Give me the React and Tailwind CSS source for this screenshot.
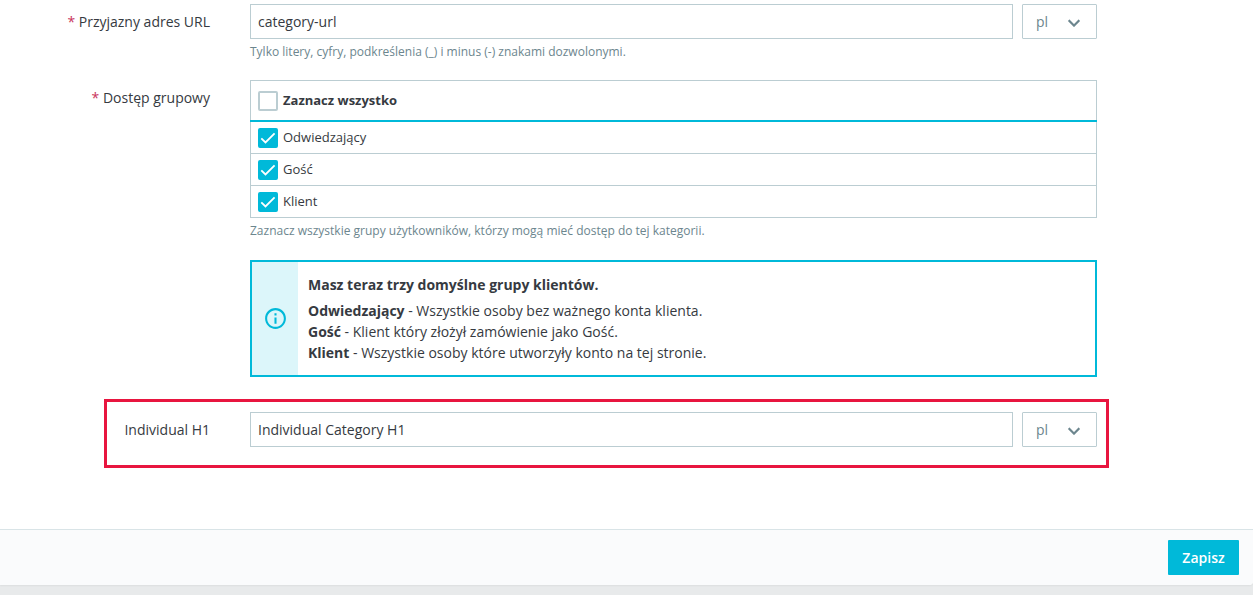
import { useState } from "react";

const groups = ["Odwiedzający", "Gość", "Klient"];

function Checkbox({ id, checked, onChange }) {
  return (
    <span className="relative block size-5 shrink-0">
      <input
        id={id}
        type="checkbox"
        checked={checked}
        onChange={onChange}
        className="peer block size-5 appearance-none rounded-xs border-2 border-[#bbcdd2] bg-white checked:border-[#00b9d9] checked:bg-[#00b9d9]"
      />
      <svg
        viewBox="0 0 20 20"
        className="pointer-events-none absolute inset-0 hidden size-5 peer-checked:block"
        fill="none"
        stroke="#fff"
        strokeWidth="1.8"
        aria-hidden="true"
      >
        <path d="M3.3 10.3 7.5 14.5 16.6 5.4" />
      </svg>
    </span>
  );
}

function LangSelect({ label }) {
  return (
    <span className="relative block w-[75px] shrink-0">
      <select
        aria-label={label}
        defaultValue="pl"
        className="block h-[35px] w-full appearance-none rounded-[1px] border border-[#bbcdd2] bg-white pl-[13px] text-sm font-medium text-[#6c868e]"
      >
        <option value="pl">pl</option>
        <option value="en">en</option>
      </select>
      <svg
        viewBox="0 0 24 24"
        className="pointer-events-none absolute top-[7px] right-[11px] size-6"
        fill="#6c868e"
        stroke="#6c868e"
        strokeWidth="0.2"
        aria-hidden="true"
      >
        <path d="M7.41 8.59 12 13.17l4.59-4.58L18 10l-6 6-6-6z" />
      </svg>
    </span>
  );
}

function TextField({ id, initial, langLabel }) {
  return (
    <div className="flex gap-[9px]">
      <input
        id={id}
        type="text"
        defaultValue={initial}
        className="h-[35px] min-w-0 flex-1 border border-[#bbcdd2] bg-white px-[7px] text-sm text-[#363a41]"
      />
      <LangSelect label={langLabel} />
    </div>
  );
}

function Required() {
  return <span className="text-[#c9355c]">* </span>;
}

export default function App() {
  const [selected, setSelected] = useState(groups);
  const [all, setAll] = useState(false);

  const toggleAll = () => {
    setSelected(all ? [] : groups);
    setAll(!all);
  };
  const toggle = (name) =>
    setSelected((list) =>
      list.includes(name) ? list.filter((item) => item !== name) : [...list, name]
    );

  return (
    <div className="min-h-screen bg-[#e8eaeb] font-['Open_Sans',sans-serif] text-sm text-[#363a41]">
      <form
        className="rounded-br-sm bg-white shadow-xs"
        onSubmit={(event) => event.preventDefault()}
      >
        <div className="pt-1 pb-[61px]">
          <div className="flex gap-10 pr-[156px]">
            <label htmlFor="url" className="w-[210px] shrink-0 pt-2 text-right">
              <Required />
              Przyjazny adres URL
            </label>
            <div className="min-w-0 flex-1">
              <TextField id="url" initial="category-url" langLabel="Język adresu URL" />
              <p className="pt-[5px] text-xs text-[#6c868e]">
                Tylko litery, cyfry, podkreślenia (_) i minus (-) znakami dozwolonymi.
              </p>
            </div>
          </div>

          <div className="flex gap-10 pt-5 pr-[156px]">
            <div id="groups-label" className="w-[210px] shrink-0 pt-2 text-right">
              <Required />
              Dostęp grupowy
            </div>
            <div className="min-w-0 flex-1">
              <table
                aria-labelledby="groups-label"
                className="w-full border-collapse border border-[#bbcdd2] text-[13px]"
              >
                <thead>
                  <tr className="border-b-2 border-[#00b9d9]">
                    <th className="h-10 px-[7px] pt-px pb-0 text-left font-bold">
                      <div className="flex items-center gap-[5px]">
                        <Checkbox id="all" checked={all} onChange={toggleAll} />
                        <label htmlFor="all">Zaznacz wszystko</label>
                      </div>
                    </th>
                  </tr>
                </thead>
                <tbody>
                  {groups.map((name) => (
                    <tr key={name} className="group border-b border-[#bbcdd2]">
                      <td className="h-8 px-[7px] py-0 group-first:h-[33px] group-first:pt-px">
                        <div className="flex items-center gap-[5px]">
                          <Checkbox
                            id={name}
                            checked={selected.includes(name)}
                            onChange={() => toggle(name)}
                          />
                          <label htmlFor={name}>{name}</label>
                        </div>
                      </td>
                    </tr>
                  ))}
                </tbody>
              </table>
              <p className="pt-[5px] text-xs text-[#6c868e]">
                Zaznacz wszystkie grupy użytkowników, którzy mogą mieć dostęp do tej kategorii.
              </p>

              <div className="mt-[21px] flex border-2 border-[#00b9d9] bg-white">
                <div className="flex w-[46px] shrink-0 items-center justify-center bg-[#dcf6fa]">
                  <svg viewBox="0 0 24 24" className="size-[25px]" fill="#00b9d9" aria-hidden="true">
                    <path d="M11 7h2v2h-2zm0 4h2v6h-2zm1-9C6.48 2 2 6.48 2 12s4.48 10 10 10 10-4.48 10-10S17.52 2 12 2zm0 18c-4.41 0-8-3.59-8-8s3.59-8 8-8 8 3.59 8 8-3.59 8-8 8z" />
                  </svg>
                </div>
                <div className="px-[10px] pt-3 pb-3 leading-[21px]">
                  <p className="pb-[5px] font-bold">Masz teraz trzy domyślne grupy klientów.</p>
                  <p>
                    <b>Odwiedzający</b> - Wszystkie osoby bez ważnego konta klienta.
                  </p>
                  <p>
                    <b>Gość</b> - Klient który złożył zamówienie jako Gość.
                  </p>
                  <p>
                    <b>Klient</b> - Wszystkie osoby które utworzyły konto na tej stronie.
                  </p>
                </div>
              </div>
            </div>
          </div>

          <div className="mt-[22px] mr-[144px] ml-[104px] flex gap-10 border-3 border-[#e8153f] pt-[10px] pr-[9px] pb-[18px]">
            <label htmlFor="h1" className="w-[103px] shrink-0 pt-2 text-right">
              Individual H1
            </label>
            <div className="min-w-0 flex-1">
              <TextField id="h1" initial="Individual Category H1" langLabel="Język nagłówka H1" />
            </div>
          </div>
        </div>

        <footer className="flex justify-end rounded-br-sm border-t border-[#d9e4e7] bg-[#fafbfc] py-[10px] pr-[14px]">
          <button
            type="submit"
            className="h-[35px] min-w-[71px] rounded-[1px] bg-[#00b9d9] px-[14px] text-sm font-semibold text-white"
          >
            Zapisz
          </button>
        </footer>
      </form>
    </div>
  );
}
